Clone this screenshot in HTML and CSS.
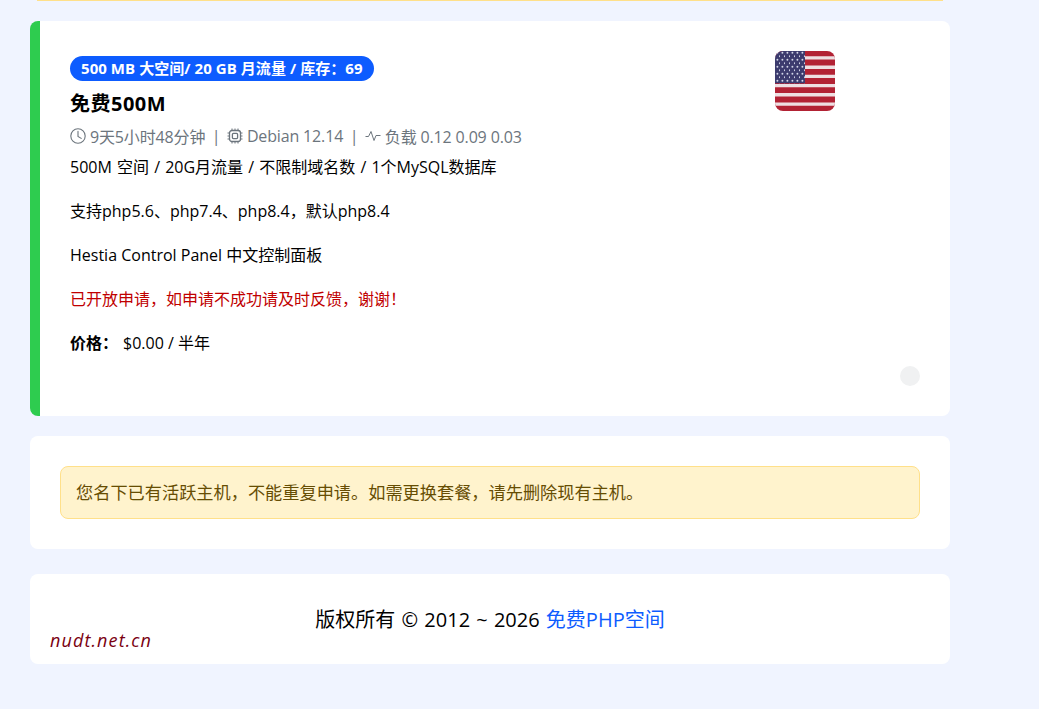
FILE: index.html
```html
<!DOCTYPE html>
<html lang="zh-CN">
<head>
    <meta charset="UTF-8">
    <meta name="viewport" content="width=device-width, initial-scale=1.0">
    <title>免费PHP空间</title>
    <link rel="stylesheet" href="styles.css">
</head>
<body>
    <div class="container">
        <div class="top-edge"></div>

        <div class="card plan-card">
            <div class="plan-head">
                <div class="plan-info">
                    <span class="badge">500 MB 大空间/ 20 GB 月流量 / 库存：69</span>
                    <h2>免费500M</h2>
                    <div class="meta">
                        <svg class="icon" viewBox="0 0 16 16" fill="none" stroke="currentColor" stroke-width="1.1" stroke-linecap="round"><circle cx="8" cy="8" r="7.2"/><path d="M8 3.4V8.4L11.2 10.4"/></svg>
                        <span>9天5小时48分钟</span>
                        <span class="sep">|</span>
                        <svg class="icon" viewBox="0 0 16 16" fill="none" stroke="currentColor" stroke-width="1.3"><rect x="2.5" y="2.5" width="11" height="11" rx="2.5"/><rect x="5.4" y="5.4" width="5.2" height="5.2" rx="1"/><path stroke-width="1" d="M5 .5V2.5M8 .5V2.5M11 .5V2.5M5 13.5V15.5M8 13.5V15.5M11 13.5V15.5M.5 5H2.5M.5 8H2.5M.5 11H2.5M13.5 5H15.5M13.5 8H15.5M13.5 11H15.5"/></svg>
                        <span>Debian 12.14</span>
                        <span class="sep">|</span>
                        <svg class="icon" viewBox="0 0 16 16" fill="none" stroke="currentColor" stroke-width="1" stroke-linejoin="round"><path d="M.5 8.5H3.5L6 3.5L9 12.5L11 7.5H15.5"/></svg>
                        <span>负载 0.12 0.09 0.03</span>
                    </div>
                </div>
                <svg class="flag" viewBox="0 0 60 60">
                    <defs>
                        <clipPath id="flagClip"><rect width="60" height="60" rx="8"/></clipPath>
                        <pattern id="stars" width="5" height="7" patternUnits="userSpaceOnUse">
                            <circle cx="2.4" cy="1.8" r="0.95" fill="#d4d7e8"/>
                            <circle cx="4.9" cy="5.3" r="0.95" fill="#d4d7e8"/>
                        </pattern>
                    </defs>
                    <g clip-path="url(#flagClip)">
                        <rect width="60" height="60" fill="#b22234"/>
                        <path d="M0 6.9H60M0 16.2H60M0 25.4H60M0 34.6H60M0 43.8H60M0 53.1H60" stroke="#eedfe2" stroke-width="3.4"/>
                        <rect width="30" height="32.3" fill="#3c3b6e"/>
                        <rect width="30" height="32.3" fill="url(#stars)"/>
                    </g>
                </svg>
            </div>
            <div class="plan-desc">
                <p>500M 空间 / 20G月流量 / 不限制域名数 / 1个MySQL数据库</p>
                <p>支持php5.6、php7.4、php8.4，默认php8.4</p>
                <p>Hestia Control Panel 中文控制面板</p>
                <p class="notice">已开放申请，如申请不成功请及时反馈，谢谢！</p>
                <p><strong class="price-label">价格：</strong>$0.00 / 半年</p>
            </div>
            <div class="plan-foot"><span class="dot"></span></div>
        </div>

        <div class="card apply-card">
            <div class="alert">您名下已有活跃主机，不能重复申请。如需更换套餐，请先删除现有主机。</div>
        </div>

        <footer class="card footer">版权所有 © 2012 ~ 2026 <a href="#">免费PHP空间</a></footer>
    </div>

    <div class="site-mark">nudt.net.cn</div>
</body>
</html>
```

FILE: styles.css
```css
:root {
    --page-bg: #f0f4ff;
    --blue: #0d5cff;
    --green: #2ecc4f;
    --muted: #6c757d;
}

html, body {
    height: 709px;
    overflow: hidden;
}

body {
    margin: 0;
    background-color: var(--page-bg);
    color: #000;
    font-family: "Open Sans", "Noto Sans CJK SC", sans-serif;
    font-size: 16px;
}

.container {
    width: 920px;
    margin-left: 30px;
}

.top-edge {
    height: 1px;
    margin: 0 7px 20px;
    background-color: #ffe08a;
}

.card {
    background-color: #fff;
    border-radius: 8px;
}

.plan-card {
    height: 395px;
    box-sizing: border-box;
    padding: 30px;
    border-left: 10px solid var(--green);
    display: flex;
    flex-direction: column;
}

.plan-head {
    display: flex;
    justify-content: space-between;
}

.badge {
    display: inline-block;
    height: 25px;
    padding: 0 11px;
    margin-top: 5px;
    border-radius: 13px;
    background-color: var(--blue);
    color: #fff;
    font-size: 15px;
    font-weight: 700;
    line-height: 25px;
    letter-spacing: 0.06px;
}

h2 {
    margin: 8px 0 0;
    font-size: 20px;
    font-weight: 700;
    line-height: 30px;
    letter-spacing: 0.5px;
}

.meta {
    display: flex;
    align-items: center;
    height: 24px;
    margin-top: 5px;
    color: var(--muted);
    font-size: 16px;
    letter-spacing: -0.15px;
}

.icon {
    width: 16px;
    height: 16px;
    margin-right: 4px;
}

.sep {
    margin: 0 6.5px;
}

.flag {
    width: 60px;
    height: 60px;
    margin-right: 85px;
}

.plan-desc {
    margin-top: 7px;
}

.plan-desc p {
    margin: 0 0 20px;
    line-height: 24px;
}

.plan-desc p:first-child {
    word-spacing: 1px;
}

.plan-desc p:last-child {
    margin-bottom: 0;
}

.plan-desc .notice {
    color: #c00000;
}

.price-label {
    margin-right: 5px;
}

.plan-foot {
    margin-top: auto;
    display: flex;
    justify-content: flex-end;
}

.dot {
    width: 20px;
    height: 20px;
    border-radius: 50%;
    background-color: #f0f1f2;
}

.apply-card {
    margin-top: 20px;
    padding: 30px;
}

.alert {
    height: 51px;
    padding: 0 15px;
    border: 1px solid #ffe08a;
    border-radius: 8px;
    background-color: #fff3cd;
    color: #664d03;
    font-size: 17.2px;
    line-height: 51px;
}

.footer {
    margin-top: 25px;
    height: 90px;
    text-align: center;
    font-size: 20px;
    line-height: 92px;
    word-spacing: 1px;
}

.footer a {
    color: var(--blue);
    text-decoration: none;
}

.site-mark {
    position: absolute;
    left: 50px;
    top: 628px;
    color: #7a0010;
    font-family: "Open Sans", sans-serif;
    font-size: 18px;
    font-style: italic;
    font-weight: 500;
    letter-spacing: 1.1px;
}
```
